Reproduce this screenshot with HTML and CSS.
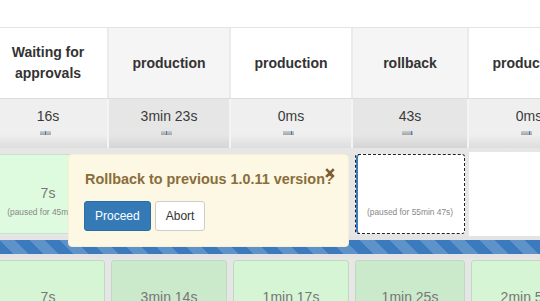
FILE: index.html
```html
<!DOCTYPE html>
<html>
<head>
<meta charset="utf-8">
<title>Stage View</title>
<link rel="stylesheet" href="styles.css">
</head>
<body>
<div class="view">
  <div class="top"></div>

  <div class="row head">
    <div class="hcell">Waiting for approvals</div>
    <div class="hcell alt">production</div>
    <div class="hcell">production</div>
    <div class="hcell alt">rollback</div>
    <div class="hcell">production</div>
  </div>

  <div class="row dur">
    <div class="dcell"><span class="avg">16s</span><span class="bar"><i style="left:5px"></i></span></div>
    <div class="dcell alt"><span class="avg">3min 23s</span><span class="bar"><i style="left:5px"></i></span></div>
    <div class="dcell"><span class="avg">0ms</span><span class="bar"><i style="left:8px"></i></span></div>
    <div class="dcell alt"><span class="avg">43s</span><span class="bar"><i style="left:9px"></i></span></div>
    <div class="dcell"><span class="avg">0ms</span><span class="bar"><i style="left:8px"></i></span></div>
  </div>

  <div class="row body r1">
    <div class="bcell"><div class="box ok"><span class="time">7s</span><span class="note">(paused for 45min 7s)</span></div></div>
    <div class="bcell alt"><div class="box ok"><span class="time">&nbsp;</span></div></div>
    <div class="bcell"><div class="box ok"><span class="time">&nbsp;</span></div></div>
    <div class="bcell alt"><div class="box paused"><span class="time">&nbsp;</span><span class="note">(paused for 55min 47s)</span></div></div>
    <div class="bcell blank"></div>
  </div>

  <div class="stripe"><div class="progress"></div></div>

  <div class="row body r2">
    <div class="bcell"><div class="box ok"><span class="time">7s</span></div></div>
    <div class="bcell alt"><div class="box ok"><span class="time">3min 14s</span></div></div>
    <div class="bcell"><div class="box ok"><span class="time">1min 17s</span></div></div>
    <div class="bcell alt"><div class="box ok"><span class="time">1min 25s</span></div></div>
    <div class="bcell"><div class="box ok"><span class="time">2min 55s</span></div></div>
  </div>

  <div class="popup">
    <div class="popup-title">Rollback to previous 1.0.11 version?</div>
    <div class="actions">
      <button class="btn btn-primary">Proceed</button>
      <button class="btn btn-default">Abort</button>
    </div>
    <svg class="close" width="10" height="10" viewBox="0 0 10 10" aria-hidden="true">
      <path d="M1.2 1.2 L8.8 8.8 M8.8 1.2 L1.2 8.8" stroke="#7d5e33" stroke-width="2.6" stroke-linecap="butt" fill="none"/>
    </svg>
  </div>
</div>
</body>
</html>
```

FILE: styles.css
```css
html, body {
  margin: 0;
  padding: 0;
  background: #fff;
}

body {
  font-family: "Liberation Sans", Arial, Helvetica, sans-serif;
  color: #333;
}

.view {
  position: relative;
  width: 540px;
  height: 301px;
  overflow: hidden;
  background: #fff;
}

.top {
  height: 27px;
  border-bottom: 1px solid #e4e4e4;
}

.row {
  display: grid;
  grid-template-columns: 118px 120px 120px 114px 120px;
  column-gap: 2px;
  margin-left: -11px;
  width: max-content;
}

/* header */
.head {
  background: #ebebeb;
}

.hcell {
  height: 70px;
  box-sizing: border-box;
  padding: 0 10px;
  background: #fff;
  display: flex;
  align-items: center;
  justify-content: center;
  text-align: center;
  font-weight: bold;
  font-size: 14px;
  line-height: 21px;
  color: #333;
}

.hcell.alt {
  background: #f5f5f5;
}

/* durations */
.dur {
  background: #f4f4f4;
  border-top: 1px solid #dcdcdc;
}

.dcell {
  height: 49px;
  box-sizing: border-box;
  padding-top: 7px;
  display: flex;
  flex-direction: column;
  align-items: center;
  background: linear-gradient(#efefef 72%, #dddddd);
  font-size: 14px;
  line-height: 20px;
  color: #3a3a3a;
}

.dcell.alt {
  background: linear-gradient(#e6e6e6 72%, #d5d5d5);
}

.bar {
  position: relative;
  width: 11px;
  height: 4px;
  margin-top: 5px;
  margin-right: 5px;
  background: linear-gradient(#cccccc, #a4a4a4);
}

.bar i {
  position: absolute;
  top: 0;
  width: 1px;
  height: 4px;
  background: #3c7fd8;
}

/* body rows */
.body {
  background: #e6e6e6;
}

.r1 {
  padding-top: 4px;
}

.bcell {
  height: 84px;
  box-sizing: border-box;
  padding: 2px;
}

.bcell.blank {
  background: #fff;
}

.box {
  height: 100%;
  box-sizing: border-box;
  border: 1px solid #c9e1c9;
  border-radius: 3px;
  display: flex;
  flex-direction: column;
  align-items: center;
  padding-top: 28px;
}

.r1 .box.ok {
  background: #dffbdf;
}

.r1 .alt .box.ok {
  background: #d4f1d4;
}

.box.paused {
  background: #fff;
  border: 1px dashed #222;
  box-shadow: inset 2px 0 0 #3d7cbc;
}

.time {
  font-size: 14px;
  line-height: 20px;
  color: #777;
  white-space: nowrap;
}

.note {
  margin-top: 4px;
  font-size: 8.4px;
  line-height: 11px;
  color: #888;
  white-space: nowrap;
}

/* progress stripe */
.stripe {
  background: #e4e4e4;
  padding: 4px 0;
}

.progress {
  height: 14px;
  background-color: #3b7bbd;
  background-image: linear-gradient(45deg,
    rgba(255, 255, 255, 0.18) 25%, transparent 25%,
    transparent 50%, rgba(255, 255, 255, 0.18) 50%,
    rgba(255, 255, 255, 0.18) 75%, transparent 75%, transparent);
  background-size: 30px 30px;
}

.r2 .bcell {
  height: 60px;
}

.r2 .box {
  padding-top: 26px;
  background: #d5f5d5;
  border-color: #c0dac0;
}

.r2 .alt .box {
  background: #cbeacb;
}

/* popup */
.popup {
  position: absolute;
  left: 68px;
  top: 154px;
  width: 281px;
  box-sizing: border-box;
  padding: 14px 16px 15px;
  background: #fcf8e3;
  border: 1px solid #faefd2;
  border-radius: 4px;
  z-index: 5;
}

.popup-title {
  font-weight: bold;
  font-size: 14.4px;
  line-height: 20px;
  color: #8a6d3b;
  white-space: nowrap;
}

.actions {
  margin-top: 12px;
  margin-left: -1px;
  display: flex;
  gap: 4px;
}

.btn {
  font-family: "Liberation Sans", Arial, Helvetica, sans-serif;
  font-size: 12px;
  line-height: 18px;
  padding: 5px 10px;
  border-radius: 3px;
  border: 1px solid transparent;
  margin: 0;
  cursor: pointer;
}

.btn-primary {
  background: #337ab7;
  border-color: #2e6da4;
  color: #fff;
}

.btn-default {
  background: #fff;
  border-color: #ccc;
  color: #333;
}

.close {
  position: absolute;
  top: 13px;
  right: 13px;
  display: block;
}
```
